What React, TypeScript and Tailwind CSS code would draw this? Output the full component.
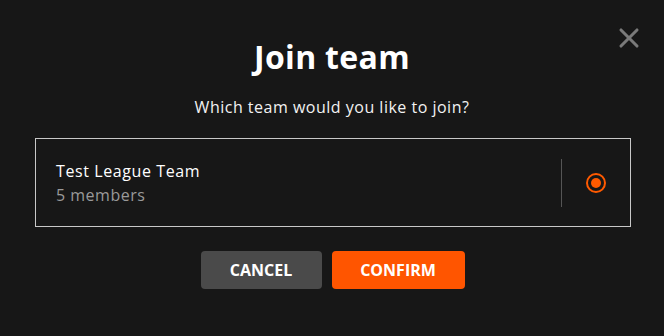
import { X } from 'lucide-react';

export default function App() {
  return (
    <div
      className="relative w-[664px] h-[336px] bg-[#171717] text-white flex flex-col items-center"
      style={{ fontFamily: '"Open Sans", "Liberation Sans", sans-serif' }}
    >
      <button className="absolute right-[19px] top-[22px] text-[#7a7a7a]">
        <X className="w-[32px] h-[32px]" strokeWidth={2.3} />
      </button>

      <h1 className="mt-[37px] text-[32px] leading-[40px] font-bold tracking-[0.3px]">Join team</h1>
      <p className="mt-[19px] text-[16px] leading-[22px] tracking-[0.5px] text-[#f2f2f2]">Which team would you like to join?</p>

      <div className="mt-[20px] ml-[2px] w-[596px] h-[89px] border border-[#c8c8c8] flex items-center">
        <div className="flex-1 pl-[20px]">
          <div className="text-[16px] leading-[20px] tracking-[0.6px] text-white">Test League Team</div>
          <div className="mt-[4px] text-[16px] leading-[20px] tracking-[0.5px] text-[#9a9a9a]">5 members</div>
        </div>
        <div className="w-px h-[48px] bg-[#555]" />
        <div className="w-[68px] flex items-center justify-center">
          <div className="w-[20px] h-[20px] rounded-full border-[2.5px] border-[#ff5a00] flex items-center justify-center">
            <div className="w-[10px] h-[10px] rounded-full bg-[#ff5a00]" />
          </div>
        </div>
      </div>

      <div className="mt-[24px] ml-[1px] flex gap-[10px]">
        <button className="w-[121px] h-[38px] rounded-[4px] bg-[#4a4a4a] text-[16px] font-bold text-white">CANCEL</button>
        <button className="w-[133px] h-[38px] rounded-[4px] bg-[#ff5500] text-[16px] font-bold text-white">CONFIRM</button>
      </div>
    </div>
  );
}
